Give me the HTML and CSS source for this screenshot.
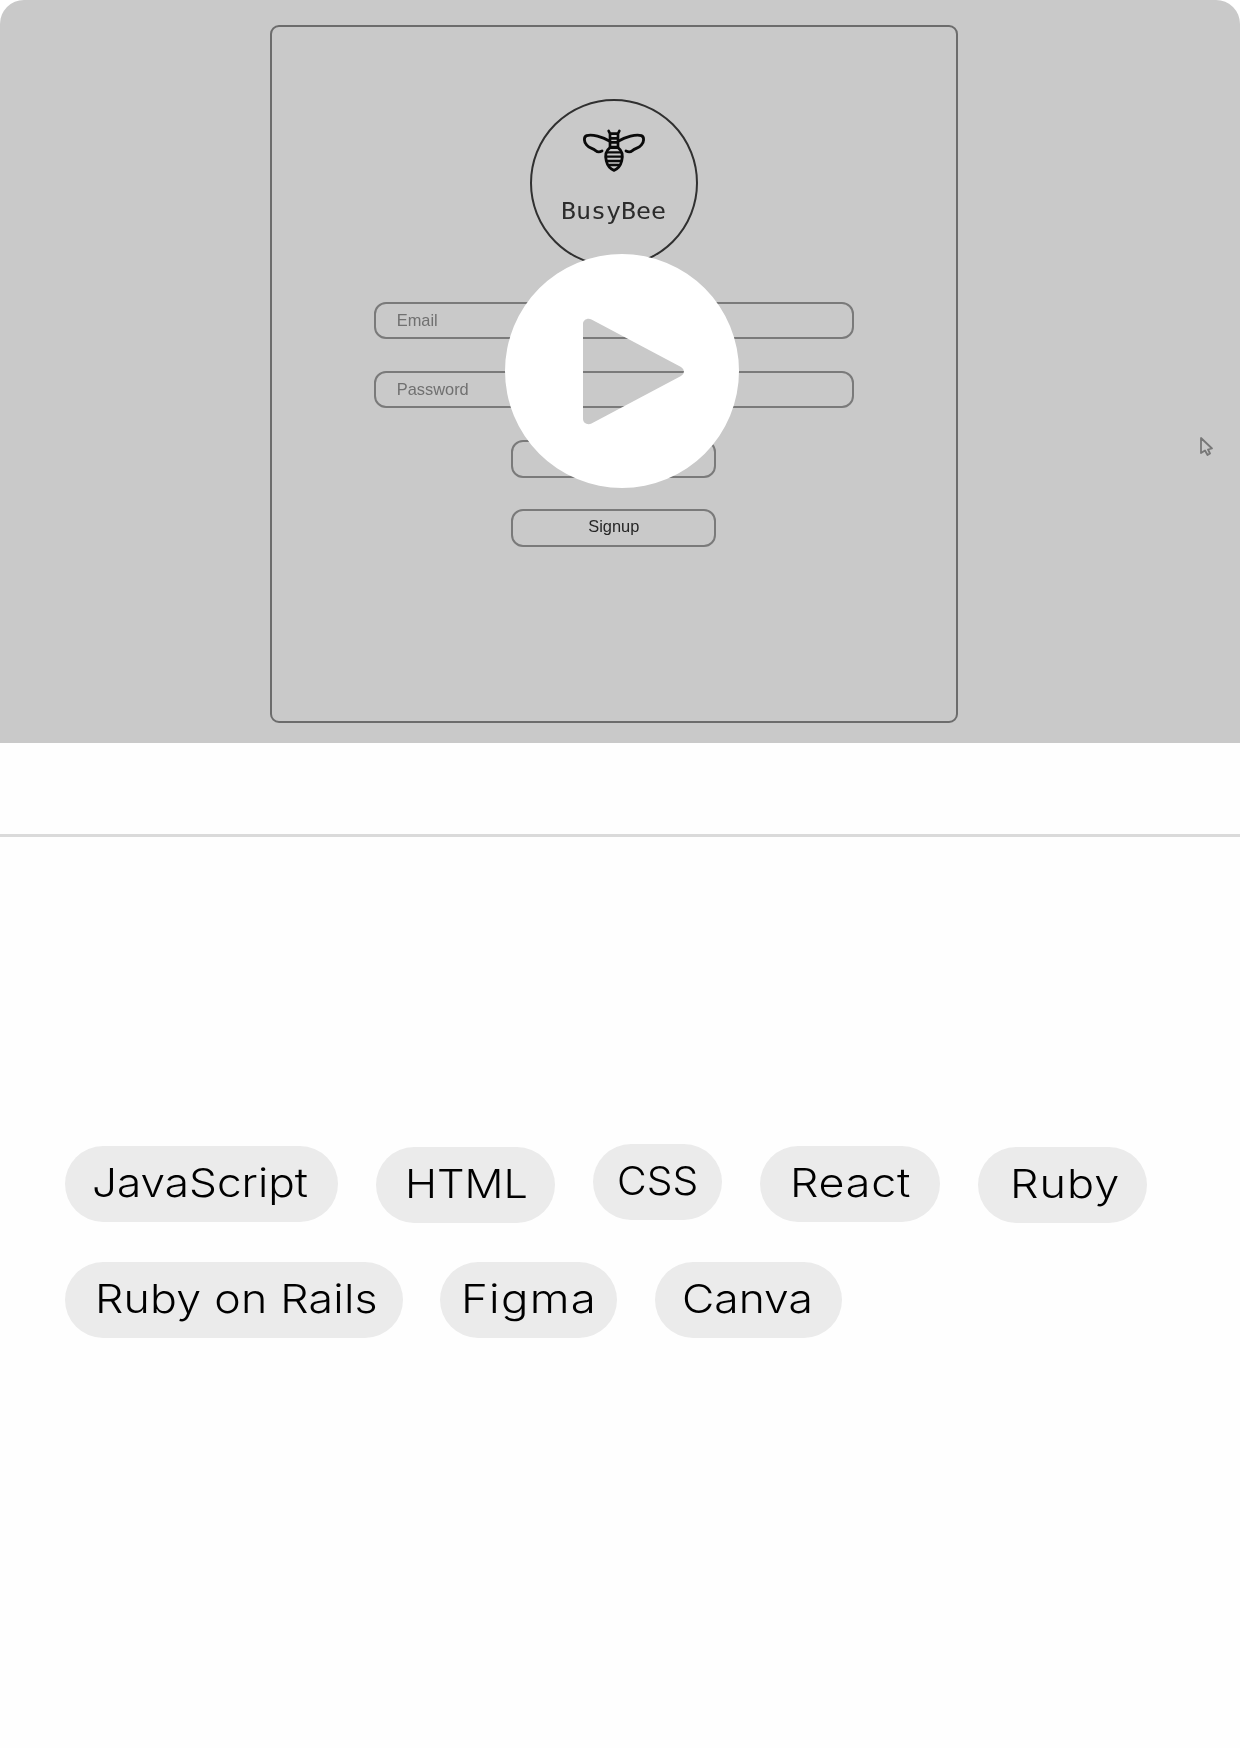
FILE: index.html
```html
<!DOCTYPE html>
<html lang="en">
<head>
<meta charset="utf-8">
<title>BusyBee</title>
<link rel="stylesheet" href="styles.css">
</head>
<body>
<main class="project">
  <section class="video">
    <div class="frame">
      <div class="login">
        <div class="logo">
          <svg class="bee" viewBox="215 145 192 135" fill="none" stroke="#0a0a0a" stroke-width="8.500" stroke-linecap="round" stroke-linejoin="round">
            <path d="M297 184C276 172 246 163 229 168C219 172 221 188 229 196C237 207 248 205 256 213C263 219 269 217 275 214"/>
            <path d="M325 184C346 172 376 163 393 168C403 172 401 188 393 196C385 207 374 205 366 213C359 219 353 217 347 214"/>
            <path d="M295 154L299 162M327 154L323 162M299 162H323V202H299ZM299 162V202M299 176H323M299 188H323" stroke-width="8"/>
            <path d="M299 204C288 212 284 228 288 244C291 256 300 268 311 272C322 268 331 256 334 244C338 228 334 212 323 204Z"/>
            <path d="M290 218H332M288 231H334M290 244H332M298 256H324" stroke-width="7"/>
          </svg>
          <span class="brand">BusyBee</span>
        </div>
        <div class="field">Email</div>
        <div class="field">Password</div>
        <div class="button"></div>
        <div class="button">Signup</div>
      </div>
      <svg class="cursor" viewBox="0 0 16 22" fill="none" stroke="#777" stroke-width="1.8" stroke-linejoin="round"><path d="M2 2V17L6 14.5L8.5 19L11 17.5L9 13.5L13 12.5Z"/></svg>
    </div>
    <svg class="play" viewBox="0 0 234 234"><path fill="#fff" fill-rule="evenodd" d="M117 0A117 117 0 1 1 117 234A117 117 0 1 1 117 0ZM78 70V165C78 169 82.500 171.500 86.500 169.500L176 122Q179 120 179 117.500T176 113L86.500 65.500C82.500 63.500 78 66 78 70Z"/></svg>
  </section>
  <hr class="divider">
  <section class="skills">
    <div class="row">
      <span class="chip javascript"><span class="label">JavaScript</span></span>
      <span class="chip html"><span class="label">HTML</span></span>
      <span class="chip css"><span class="label">CSS</span></span>
      <span class="chip react"><span class="label">React</span></span>
      <span class="chip ruby"><span class="label">Ruby</span></span>
    </div>
    <div class="row second">
      <span class="chip rails"><span class="label">Ruby on Rails</span></span>
      <span class="chip figma"><span class="label">Figma</span></span>
      <span class="chip canva"><span class="label">Canva</span></span>
    </div>
  </section>
</main>
</body>
</html>
```
FILE: styles.css
```css
* { box-sizing: border-box; }
body { margin: 0; background: #fff; }
.project { min-height: 1748px; background: #fefefe; border-radius: 24px 24px 0 0; }
.video { position: relative; height: 742.5px; background: #c9c9c9; border-radius: 24px 24px 0 0; }
.frame { height: 100%; padding: 25px 0 0 269.500px; filter: blur(.4px); }
.login {
  display: flex; flex-direction: column; align-items: center;
  width: 688.5px; height: 698px; padding-top: 71.500px;
  border: 2px solid #6c6c6c; border-radius: 9px;
  font: 16.400px "Liberation Sans", Arial, sans-serif;
}
.logo {
  display: flex; flex-direction: column; align-items: center;
  width: 168px; height: 168px; margin-bottom: 35px; padding-top: 27.500px;
  border: 2px solid #303030; border-radius: 50%;
}
.bee { flex: none; width: 64px; height: 45px; }
.brand {
  margin-top: 22px; color: #2c2c2c;
  font: 23px/32px "DejaVu Sans Mono", monospace;
  transform: scaleX(1.085);
}
.field, .button { flex: none; border: 2px solid #7a7a7a; border-radius: 12px; }
.field { width: 480px; height: 37px; margin-bottom: 32px; padding-left: 21px; line-height: 32px; color: #707070; }
.button { width: 205px; height: 38px; margin-bottom: 31px; line-height: 31px; text-align: center; color: #262626; }
.cursor { position: absolute; left: 1199px; top: 435.500px; width: 16px; height: 22px; }
.play { position: absolute; left: 505px; top: 254px; width: 234px; height: 234px; }
.divider { height: 3px; margin: 91.500px 0 0; border: 0; background: #dadada; }
.skills { display: flex; flex-direction: column; gap: 40.300px; padding: 308.700px 0 0 65px; }
.row { display: flex; align-items: flex-start; gap: 38px; height: 76px; }
.second { gap: 37.400px; }
.chip {
  flex: none; height: 76px; border-radius: 38px; background: #ebebeb; color: #000;
  font: 340 40px/73px Inter, "Open Sans", sans-serif; white-space: nowrap;
}
.label { display: inline-block; transform-origin: left center; }
.javascript { width: 273px; padding-left: 27px; }
.javascript .label { transform: scaleX(1.104); }
.html { width: 178.500px; padding-left: 28.500px; margin-top: 1px; }
.html .label { transform: scaleX(1.082); }
.css { width: 129.500px; padding-left: 24.500px; margin-top: -2px; }
.css .label { transform: scaleX(1.020); }
.react { width: 180px; padding-left: 29.500px; }
.react .label { transform: scaleX(1.120); letter-spacing: .700px; }
.ruby { width: 168.500px; padding-left: 31.500px; margin-top: 1px; }
.ruby .label { transform: scaleX(1.125); letter-spacing: .900px; }
.rails { width: 338px; padding-left: 29.500px; }
.rails .label { transform: scaleX(1.117); letter-spacing: .200px; }
.figma { width: 177px; padding-left: 20.500px; }
.figma .label { transform: scaleX(1.140); letter-spacing: 1.100px; }
.canva { width: 187px; padding-left: 27.500px; }
.canva .label { transform: scaleX(1.110); }
```
